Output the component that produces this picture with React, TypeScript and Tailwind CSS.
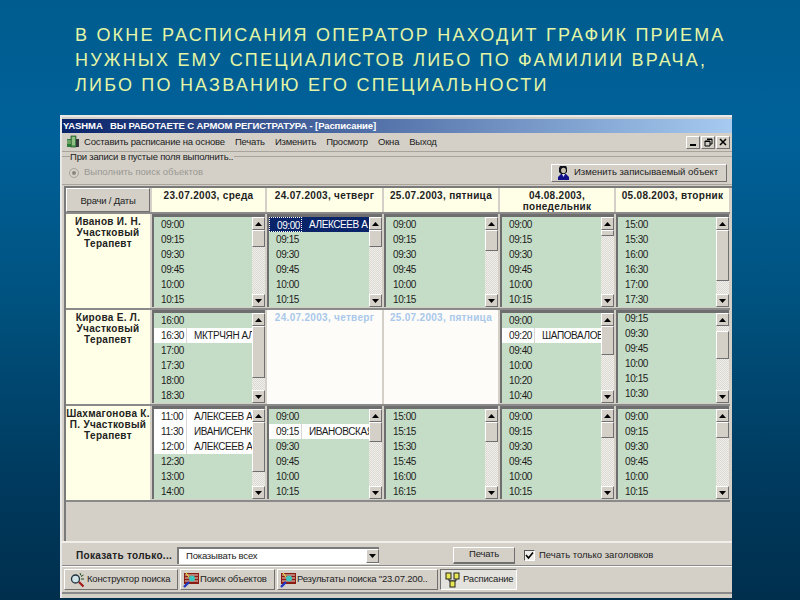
import { ReactNode } from "react";

const bevel = "border border-t-white border-l-white border-r-[#6f6f6f] border-b-[#6f6f6f]";

type Slot = { t: string; name?: string; selected?: boolean };

interface ListData {
  slots: Slot[];
  thumb: number;
  offset?: number;
  shift?: boolean;
}

const times = (s: string) => s.split(" ").map((t) => ({ t }));

const rows: { doctor: string; lists: (ListData | string)[] }[] = [
  {
    doctor: "Иванов И. Н. Участковый Терапевт",
    lists: [
      { slots: times("09:00 09:15 09:30 09:45 10:00 10:15"), thumb: 17 },
      {
        slots: [{ t: "09:00", name: "АЛЕКСЕЕВ А", selected: true }, ...times("09:15 09:30 09:45 10:00 10:15")],
        thumb: 17,
      },
      { slots: times("09:00 09:15 09:30 09:45 10:00 10:15"), thumb: 21 },
      { slots: times("09:00 09:15 09:30 09:45 10:00 10:15"), thumb: 6 },
      { slots: times("15:00 15:30 16:00 16:30 17:00 17:30"), thumb: 51 },
    ],
  },
  {
    doctor: "Кирова Е. Л. Участковый Терапевт",
    lists: [
      {
        slots: [{ t: "16:00" }, { t: "16:30", name: "МКТРЧЯН АЛ" }, ...times("17:00 17:30 18:00 18:30")],
        thumb: 52,
      },
      "24.07.2003, четверг",
      "25.07.2003, пятница",
      {
        slots: [{ t: "09:00" }, { t: "09:20", name: "ШАПОВАЛОВ" }, ...times("09:40 10:00 10:20 10:40")],
        thumb: 29,
      },
      { slots: times("09:15 09:30 09:45 10:00 10:15 10:30"), thumb: 28, offset: 5, shift: true },
    ],
  },
  {
    doctor: "Шахмагонова К. П. Участковый Терапевт",
    lists: [
      {
        slots: [
          { t: "11:00", name: "АЛЕКСЕЕВ А" },
          { t: "11:30", name: "ИВАНИСЕНК" },
          { t: "12:00", name: "АЛЕКСЕЕВ А" },
          ...times("12:30 13:00 14:00"),
        ],
        thumb: 50,
      },
      {
        slots: [{ t: "09:00" }, { t: "09:15", name: "ИВАНОВСКАЯ" }, ...times("09:30 09:45 10:00 10:15")],
        thumb: 20,
      },
      { slots: times("15:00 15:15 15:30 15:45 16:00 16:15"), thumb: 20 },
      { slots: times("09:00 09:15 09:30 09:45 10:00 10:15"), thumb: 16 },
      { slots: times("09:00 09:15 09:30 09:45 10:00 10:15"), thumb: 16 },
    ],
  },
];

const dates = ["23.07.2003, среда", "24.07.2003, четверг", "25.07.2003, пятница", "04.08.2003, понедельник", "05.08.2003, вторник"];

const gridCols = "grid grid-cols-[84px_113px_115px_114px_114px_113px] gap-x-[2px]";

function Arrow({ up }: { up?: boolean }) {
  return (
    <div className={`${bevel} flex h-[13px] w-full shrink-0 items-center justify-center bg-[#d4d0c8]`}>
      <svg width="7" height="4" viewBox="0 0 7 4">
        <path d={up ? "M3.5 0L7 4H0z" : "M0 0h7L3.5 4z"} fill="#000" />
      </svg>
    </div>
  );
}

function Scrollbar({ thumb, offset = 0 }: { thumb: number; offset?: number }) {
  return (
    <div className="flex h-full w-[13px] shrink-0 flex-col bg-[#e6e4df] bg-[repeating-conic-gradient(#dcd9d2_0_25%,#f0efeb_0_50%)] bg-[length:2px_2px]">
      <Arrow up />
      <div className={`${bevel} w-full shrink-0 bg-[#d4d0c8]`} style={{ height: thumb, marginTop: offset }} />
      <div className="flex-1" />
      <Arrow />
    </div>
  );
}

function TimeList({ data }: { data: ListData }) {
  return (
    <div className="flex h-[93px] overflow-hidden border-t-[3px] border-l-2 border-[#6e6e6e] bg-[#c5dcc6] text-[10px] tracking-[-0.4px] text-[#1c1c1c]">
      <div className={`min-w-0 flex-1 overflow-hidden ${data.shift ? "-mt-[2px]" : ""}`}>
        {data.slots.map((s) => (
          <div
            key={s.t}
            className={`flex h-[15px] items-center whitespace-nowrap ${s.selected ? "bg-[#0a246a] text-white" : s.name ? "bg-white" : ""}`}
          >
            <span
              className={`h-full w-[33px] shrink-0 pl-[7px] leading-[15px] ${s.selected ? "border border-dotted border-white pl-[6px] leading-[13px]" : s.name ? "border-r border-[#d8d8d8]" : ""}`}
            >
              {s.t}
            </span>
            {s.name && <span className="pl-[7px] leading-[15px]">{s.name}</span>}
          </div>
        ))}
      </div>
      <Scrollbar thumb={data.thumb} offset={data.offset} />
    </div>
  );
}

function MenuIcon() {
  return (
    <svg width="14" height="14" viewBox="0 0 14 14">
      <rect x="1" y="4" width="4" height="8" fill="#2f7d3a" />
      <rect x="5" y="1" width="5" height="11" fill="#58a05a" stroke="#1d4d24" strokeWidth="0.7" />
      <path d="M6 3h3M6 5h3M6 7h3M6 9h3" stroke="#e8f0c8" strokeWidth="0.8" />
      <rect x="10" y="4" width="3" height="8" fill="#33363a" />
      <path d="M1 6h4M1 8h4" stroke="#c8d8a0" strokeWidth="0.8" />
    </svg>
  );
}

function PersonIcon() {
  return (
    <svg width="13" height="15" viewBox="0 0 13 15" className="shrink-0">
      <path d="M3 1h6l1 2v4l-2 2H4L2 7V3z" fill="#101018" />
      <ellipse cx="6.500" cy="5.500" rx="2.400" ry="2.800" fill="#c9c3b0" />
      <path d="M1 15v-3l3-3h5l3 3v3z" fill="#10108a" />
      <path d="M5 9h3l-1.500 3z" fill="#e8e8f0" />
    </svg>
  );
}

function SearchIcon() {
  return (
    <svg width="16" height="16" viewBox="0 0 16 16" className="shrink-0">
      <path d="M10 10l4.500 4.500" stroke="#a01818" strokeWidth="2.200" />
      <circle cx="6.500" cy="7" r="4" fill="#cfe2e8" stroke="#20303a" strokeWidth="1.300" />
      <path d="M11 1l1 2.500M14.500 3l-2.500 1.500M15 7h-3" stroke="#1e4f1e" strokeWidth="1" />
    </svg>
  );
}

function ResultsIcon() {
  return (
    <svg width="17" height="16" viewBox="0 0 17 16" className="shrink-0">
      <rect x="1" y="1" width="15" height="11" fill="#8a1c14" />
      <path d="M2 3h13M2 6h13M2 9h13" stroke="#e8dcc8" strokeWidth="1" />
      <circle cx="9" cy="6.500" r="3" fill="#3cc6c0" />
      <path d="M1 15l5-5" stroke="#2038c0" strokeWidth="2.400" />
      <path d="M3 1l3 4" stroke="#e8e040" strokeWidth="1.200" />
    </svg>
  );
}

function ScheduleIcon() {
  return (
    <svg width="16" height="16" viewBox="0 0 16 16" className="shrink-0">
      <path d="M4 5v4h4M11 5v4H8v2" fill="none" stroke="#222" strokeWidth="1" />
      <rect x="1" y="1" width="5" height="6" fill="#e8e850" stroke="#222" strokeWidth="1" />
      <rect x="9" y="1" width="5" height="6" fill="#e8e850" stroke="#222" strokeWidth="1" />
      <rect x="5" y="9" width="5" height="6" fill="#e8e850" stroke="#222" strokeWidth="1" />
    </svg>
  );
}

function Tab({ icon, label, width, active, tight }: { icon: ReactNode; label: string; width: string; active?: boolean; tight?: boolean }) {
  return (
    <div
      className={`flex h-[21px] items-center overflow-hidden whitespace-nowrap ${tight ? "gap-0 pl-[2px]" : "gap-[2px] pl-[4px]"} ${width} ${
        active ? "border border-t-[#6f6f6f] border-l-[#6f6f6f] border-r-white border-b-white bg-[#e4e2dd]" : `${bevel} bg-[#d4d0c8]`
      }`}
    >
      {icon}
      <span>{label}</span>
    </div>
  );
}

function MdiButton({ children }: { children: ReactNode }) {
  return <div className={`${bevel} flex h-[13px] w-[14px] items-center justify-center bg-[#d4d0c8]`}>{children}</div>;
}

export default function App() {
  return (
    <div className="h-[600px] w-[800px] overflow-hidden bg-[linear-gradient(180deg,#005c8e_0%,#00619a_22%,#00527f_50%,#003a5e_80%,#002f4d_100%)] font-['Liberation_Sans',sans-serif]">
      <h1 className="w-[745px] pl-[75px] pt-[23px] text-[18px] leading-[25px] font-normal tracking-[2.2px] text-[#e4f5a6]">
        В ОКНЕ РАСПИСАНИЯ ОПЕРАТОР НАХОДИТ ГРАФИК ПРИЕМА НУЖНЫХ ЕМУ СПЕЦИАЛИСТОВ ЛИБО ПО ФАМИЛИИ ВРАЧА, ЛИБО ПО НАЗВАНИЮ ЕГО СПЕЦИАЛЬНОСТИ
      </h1>

      <div className="ml-[60px] mt-[17px] h-[483px] w-[672px] border-t-2 border-l-2 border-[#e8e8e8] bg-[#d4d0c8] text-[9.500px] tracking-[-0.2px] text-[#222]">
        <div className="mt-[2px] flex h-[14px] items-center bg-[linear-gradient(90deg,#0a246a,#a6caf0)] pl-[1px] text-[9.500px] font-bold tracking-[-0.1px] whitespace-pre text-white">
          YASHMA   ВЫ РАБОТАЕТЕ С АРМОМ РЕГИСТРАТУРА - [Расписание]
        </div>

        <div className="flex h-[19px] items-center border-b border-[#a8a49c] pl-[4px] pr-[2px]">
          <MenuIcon />
          <div className="ml-[4px] flex gap-[10px]">
            <span>Составить расписание на основе</span>
            <span>Печать</span>
            <span>Изменить</span>
            <span>Просмотр</span>
            <span>Окна</span>
            <span>Выход</span>
          </div>
          <div className="ml-auto flex gap-[1px]">
            <MdiButton>
              <span className="mt-[6px] h-[2px] w-[6px] bg-black" />
            </MdiButton>
            <MdiButton>
              <svg width="9" height="9" viewBox="0 0 9 9">
                <path d="M3 1h5v5H6M1 3h5v5H1zM1 3.500h5M3 1.500h5" fill="none" stroke="#000" />
              </svg>
            </MdiButton>
            <MdiButton>
              <svg width="8" height="8" viewBox="0 0 8 8">
                <path d="M1 1l6 6M7 1L1 7" stroke="#000" strokeWidth="1.500" />
              </svg>
            </MdiButton>
          </div>
        </div>

        <fieldset className="mx-0 flex h-[33px] items-center justify-between border-t border-b border-[#a8a49c] pl-[7px] pr-[5px]">
          <legend className="-mt-[2px] ml-[1px] h-[9px] pr-[1px] leading-[9px]">При записи в пустые поля выполнить..</legend>
          <div className="flex items-center gap-[5px] tracking-[0px] text-[#9a9892]">
            <span className="flex h-[10px] w-[10px] items-center justify-center rounded-full border border-[#a8a49c]">
              <span className="h-[4px] w-[4px] rounded-full bg-[#8a8880]" />
            </span>
            Выполнить поиск объектов
          </div>
          <div className={`${bevel} flex h-[18px] w-[176px] items-center gap-[4px] whitespace-nowrap pl-[5px] tracking-[0px]`}>
            <PersonIcon />
            Изменить записываемый объект
          </div>
        </fieldset>

        <div className="ml-[2px] mt-[1px] h-[355px] border-t-2 border-l-2 border-[#7a7a7a] pr-[2px]">
          <div className={`${gridCols} h-[24px]`}>
            <div className={`${bevel} flex items-center justify-center bg-[#d4d0c8] pt-[2px]`}>Врачи / Даты</div>
            {dates.map((d) => (
              <div key={d} className="bg-[#ffffe8] px-[4px] pt-[2px] text-center text-[10px] leading-[11px] font-bold tracking-[0.3px]">
                {d}
              </div>
            ))}
          </div>
          {rows.map((r) => (
            <div key={r.doctor} className={`${gridCols} h-[96px] border-t-2 border-[#8a8a8a]`}>
              <div className="bg-[#ffffe8] pt-[2px] text-center text-[10px] leading-[11px] font-bold tracking-[0.3px]">{r.doctor}</div>
              {r.lists.map((l, i) =>
                typeof l === "string" ? (
                  <div key={i} className="bg-[#fdfcf9] pt-[2px] text-center text-[10px] leading-[12px] font-bold tracking-[0.3px] text-[#a9c8ea]">
                    {l}
                  </div>
                ) : (
                  <TimeList key={i} data={l} />
                ),
              )}
            </div>
          ))}
          <div className="h-[2px] bg-[#8a8a8a]" />
        </div>

        <div className="flex h-[25px] items-center border-t-2 border-b border-t-[#f0efec] border-b-[#8a8a8a] pl-[14px] pt-[2px]">
          <span className="w-[101px] text-[10px] font-bold tracking-[0.3px]">Показать только...</span>
          <div className="flex h-[17px] w-[202px] items-center justify-between border-t-2 border-l-2 border-[#7a7a7a] bg-white pl-[7px]">
            Показывать всех
            <div className={`${bevel} flex h-[14px] w-[13px] items-center justify-center bg-[#d4d0c8]`}>
              <svg width="7" height="4" viewBox="0 0 7 4">
                <path d="M0 0h7L3.500 4z" fill="#000" />
              </svg>
            </div>
          </div>
          <div className={`${bevel} ml-[74px] flex h-[17px] w-[62px] items-center justify-center border-b-2`}>Печать</div>
          <span className="ml-[9px] flex h-[11px] w-[11px] items-center justify-center border border-t-[#555] border-l-[#555] border-r-white border-b-white bg-[#f0efec]">
            <svg width="9" height="9" viewBox="0 0 9 9">
              <path d="M1 4l2.500 3L8 1.500" fill="none" stroke="#000" strokeWidth="1.600" />
            </svg>
          </span>
          <span className="ml-[4px] tracking-[0px]">Печать только заголовков</span>
        </div>

        <div className="flex h-[28px] items-center gap-[2px] border-t border-b-2 border-t-white border-b-[#8a8a8a] pl-[2px]">
          <Tab icon={<SearchIcon />} label="Конструктор поиска" width="w-[114px]" />
          <Tab icon={<ResultsIcon />} label="Поиск объектов" width="w-[95px]" tight />
          <Tab icon={<ResultsIcon />} label={'Результаты поиска "23.07.200..'} width="w-[161px]" tight />
          <Tab icon={<ScheduleIcon />} label="Расписание" width="w-[77px]" active />
        </div>
      </div>
    </div>
  );
}
